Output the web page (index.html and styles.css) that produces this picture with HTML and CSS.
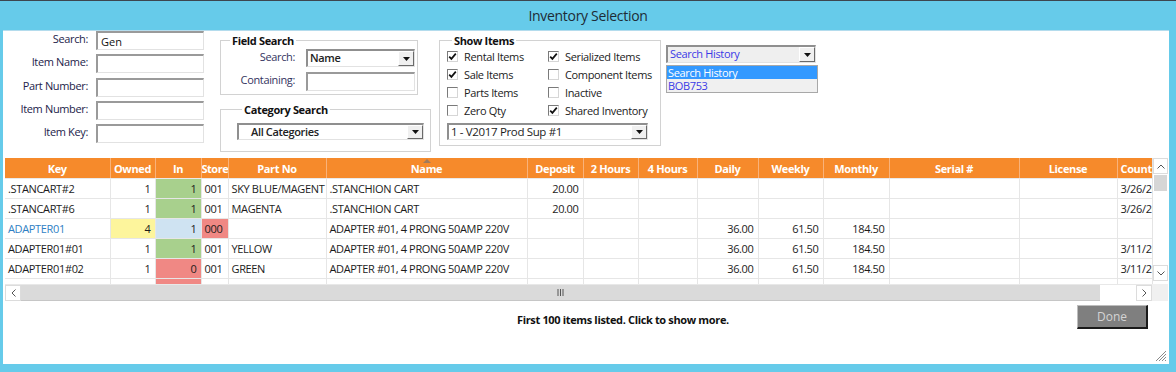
FILE: index.html
```html
<!DOCTYPE html>
<html lang="en">
<head>
    <meta charset="UTF-8">
    <title>Inventory Selection</title>
    <link rel="stylesheet" href="styles.css">
</head>
<body>
    <div class="window">
        <div class="titlebar">Inventory Selection</div>

        <div class="client">
            <!-- Search filters -->
            <div class="filters">
                <div class="keyfields">
                    <label>Search:</label><input class="txt" value="Gen">
                    <label>Item Name:</label><input class="txt">
                    <label>Part Number:</label><input class="txt">
                    <label>Item Number:</label><input class="txt">
                    <label>Item Key:</label><input class="txt">
                </div>

                <div class="group-col">
                    <fieldset class="group field-search">
                        <legend>Field Search</legend>
                        <div class="field-grid">
                            <label>Search:</label>
                            <div class="combo"><span class="combo-text strong">Name</span><span class="combo-btn"><svg width="7" height="4" viewBox="0 0 7 4"><path d="M0 0H7L3.5 4Z" fill="#111"/></svg></span></div>
                            <label>Containing:</label>
                            <input class="txt">
                        </div>
                    </fieldset>

                    <fieldset class="group category-search">
                        <legend>Category Search</legend>
                        <div class="combo cat-combo"><span class="combo-text strong">All Categories</span><span class="combo-btn"><svg width="7" height="4" viewBox="0 0 7 4"><path d="M0 0H7L3.5 4Z" fill="#111"/></svg></span></div>
                    </fieldset>
                </div>

                <fieldset class="group show-items">
                    <legend>Show Items</legend>
                    <div class="checks">
                        <div class="check"><span class="box on"><svg width="9" height="9" viewBox="0 0 9 9"><path d="M1.2 4.6L3.4 6.9L7.8 1.6" fill="none" stroke="#111" stroke-width="1.7"/></svg></span>Rental Items</div>
                        <div class="check"><span class="box on"><svg width="9" height="9" viewBox="0 0 9 9"><path d="M1.2 4.6L3.4 6.9L7.8 1.6" fill="none" stroke="#111" stroke-width="1.7"/></svg></span>Serialized Items</div>
                        <div class="check"><span class="box on"><svg width="9" height="9" viewBox="0 0 9 9"><path d="M1.2 4.6L3.4 6.9L7.8 1.6" fill="none" stroke="#111" stroke-width="1.7"/></svg></span>Sale Items</div>
                        <div class="check"><span class="box"></span>Component Items</div>
                        <div class="check"><span class="box"></span>Parts Items</div>
                        <div class="check"><span class="box"></span>Inactive</div>
                        <div class="check"><span class="box"></span>Zero Qty</div>
                        <div class="check"><span class="box on"><svg width="9" height="9" viewBox="0 0 9 9"><path d="M1.2 4.6L3.4 6.9L7.8 1.6" fill="none" stroke="#111" stroke-width="1.7"/></svg></span>Shared Inventory</div>
                        <div class="combo store-combo"><span class="combo-text">1 - V2017 Prod Sup #1</span><span class="combo-btn"><svg width="7" height="4" viewBox="0 0 7 4"><path d="M0 0H7L3.5 4Z" fill="#111"/></svg></span></div>
                    </div>
                </fieldset>

                <div class="history">
                    <div class="combo history-combo"><span class="combo-text">Search History</span><span class="combo-btn"><svg width="7" height="4" viewBox="0 0 7 4"><path d="M0 0H7L3.5 4Z" fill="#111"/></svg></span></div>
                    <ul class="history-list">
                        <li class="selected">Search History</li>
                        <li>BOB753</li>
                    </ul>
                </div>
            </div>

            <!-- Item grid -->
            <div class="grid">
                <div class="grid-main">
                    <div class="grid-view">
                        <table>
                            <colgroup>
                                <col style="width:105px"><col style="width:45px"><col style="width:46px"><col style="width:27px">
                                <col style="width:98px"><col style="width:201px"><col style="width:56px"><col style="width:55px">
                                <col style="width:59px"><col style="width:61px"><col style="width:65px"><col style="width:66px">
                                <col style="width:130px"><col style="width:98px"><col style="width:70px">
                            </colgroup>
                            <thead>
                                <tr>
                                    <th>Key</th><th>Owned</th><th>In</th><th class="tight">Store</th><th>Part No</th>
                                    <th class="sorted">Name</th><th>Deposit</th><th>2 Hours</th><th>4 Hours</th><th>Daily</th>
                                    <th>Weekly</th><th>Monthly</th><th>Serial #</th><th>License</th><th class="left">Count</th>
                                </tr>
                            </thead>
                            <tbody>
                                <tr>
                                    <td>.STANCART#2</td><td class="num">1</td><td class="num in-ok">1</td><td>001</td><td>SKY BLUE/MAGENT</td>
                                    <td>.STANCHION CART</td><td class="num">20.00</td><td></td><td></td><td></td>
                                    <td></td><td></td><td></td><td></td><td>3/26/2017</td>
                                </tr>
                                <tr>
                                    <td>.STANCART#6</td><td class="num">1</td><td class="num in-ok">1</td><td>001</td><td>MAGENTA</td>
                                    <td>.STANCHION CART</td><td class="num">20.00</td><td></td><td></td><td></td>
                                    <td></td><td></td><td></td><td></td><td>3/26/2017</td>
                                </tr>
                                <tr>
                                    <td class="link">ADAPTER01</td><td class="num owned-multi">4</td><td class="num in-part">1</td><td class="store-none">000</td><td></td>
                                    <td>ADAPTER #01, 4 PRONG 50AMP 220V</td><td></td><td></td><td></td><td class="num">36.00</td>
                                    <td class="num">61.50</td><td class="num">184.50</td><td></td><td></td><td></td>
                                </tr>
                                <tr>
                                    <td>ADAPTER01#01</td><td class="num">1</td><td class="num in-ok">1</td><td>001</td><td>YELLOW</td>
                                    <td>ADAPTER #01, 4 PRONG 50AMP 220V</td><td></td><td></td><td></td><td class="num">36.00</td>
                                    <td class="num">61.50</td><td class="num">184.50</td><td></td><td></td><td>3/11/2017</td>
                                </tr>
                                <tr>
                                    <td>ADAPTER01#02</td><td class="num">1</td><td class="num in-out">0</td><td>001</td><td>GREEN</td>
                                    <td>ADAPTER #01, 4 PRONG 50AMP 220V</td><td></td><td></td><td></td><td class="num">36.00</td>
                                    <td class="num">61.50</td><td class="num">184.50</td><td></td><td></td><td>3/11/2017</td>
                                </tr>
                                <tr>
                                    <td>ADAPTER01#03</td><td class="num">1</td><td class="num in-out">0</td><td>001</td><td>RED</td>
                                    <td>ADAPTER #01, 4 PRONG 50AMP 220V</td><td></td><td></td><td></td><td class="num">36.00</td>
                                    <td class="num">61.50</td><td class="num">184.50</td><td></td><td></td><td>3/11/2017</td>
                                </tr>
                            </tbody>
                        </table>
                    </div>
                    <div class="vscroll">
                        <span class="sb-btn"><svg width="8" height="5" viewBox="0 0 8 5"><path d="M0.5 4.5L4 1L7.5 4.5" fill="none" stroke="#555" stroke-width="1"/></svg></span>
                        <span class="vthumb"></span>
                        <span class="sb-track"></span>
                        <span class="sb-btn"><svg width="8" height="5" viewBox="0 0 8 5"><path d="M0.5 0.5L4 4L7.5 0.5" fill="none" stroke="#555" stroke-width="1"/></svg></span>
                    </div>
                </div>
                <div class="hscroll-row">
                    <div class="hscroll">
                        <span class="sb-btn"><svg width="5" height="8" viewBox="0 0 5 8"><path d="M4.5 0.5L1 4L4.5 7.5" fill="none" stroke="#555" stroke-width="1"/></svg></span>
                        <span class="hthumb"><svg width="7" height="7" viewBox="0 0 7 7"><path d="M1 0V7M3.5 0V7M6 0V7" stroke="#555" stroke-width="1"/></svg></span>
                        <span class="sb-track"></span>
                        <span class="sb-btn"><svg width="5" height="8" viewBox="0 0 5 8"><path d="M0.5 0.5L4 4L0.5 7.5" fill="none" stroke="#555" stroke-width="1"/></svg></span>
                    </div>
                    <span class="corner"></span>
                </div>
            </div>

            <!-- Footer -->
            <div class="footer">
                <span class="more">First 100 items listed. Click to show more.</span>
                <button class="done">Done</button>
            </div>

            <svg class="grip" width="12" height="12" viewBox="0 0 12 12">
                <path d="M11 1L1 11M11 4L4 11M11 7L7 11M11 10L10 11" stroke="#8a8a8a" stroke-width="1"/>
            </svg>
        </div>
    </div>
</body>
</html>
```

FILE: styles.css
```css
body {
    margin: 0;
    background-color: #66cbea;
    font-family: "Open Sans", "Noto Sans", sans-serif;
    font-size: 11px;
    letter-spacing: -0.35px;
    color: #1c1c1c;
}
.window {
    border-top: 1px solid #3d4650;
    height: 371px;
}
.titlebar {
    height: 29px;
    line-height: 29px;
    text-align: center;
    font-size: 14px;
    letter-spacing: -0.3px;
    color: #1e2b36;
}
.client {
    position: relative;
    margin: 0 7px 0 3px;
    height: 334px;
    background: #fff;
    box-sizing: border-box;
    border-top: 1px solid #b4dced;
}

/* ---------- filters ---------- */
.filters {
    display: flex;
    align-items: flex-start;
    height: 127px;
}
.keyfields {
    display: grid;
    grid-template-columns: 85px 108px;
    grid-auto-rows: 19px;
    column-gap: 8px;
    row-gap: 4.25px;
}
label {
    text-align: right;
    line-height: 16px;
    color: #23234a;
    white-space: nowrap;
}
.txt {
    box-sizing: border-box;
    width: 100%;
    height: 19px;
    margin: 0;
    padding: 0 3px;
    font: inherit;
    color: #111;
    background: #fff;
    border-style: solid;
    border-width: 2px 1px 1px 2px;
    border-color: #9a9a9a #e2e2e2 #e2e2e2 #9a9a9a;
    outline: none;
}
.group-col {
    margin-left: 16px;
}
.group {
    box-sizing: border-box;
    margin: 0;
    border: 1px solid #d2d2d2;
}
.group legend {
    padding: 0 2px;
    margin-left: 5px;
    font-weight: 700;
    line-height: 13px;
    color: #111;
}
.field-search {
    width: 198px;
    height: 61px;
    margin-top: 3px;
    padding: 2px 1px 0 4px;
}
.field-grid {
    display: grid;
    grid-template-columns: 70px 109px;
    grid-template-rows: 18px 19px;
    column-gap: 11px;
    row-gap: 5px;
}
.field-grid label {
    color: #33335e;
}
.category-search {
    width: 211px;
    height: 49px;
    margin-top: 8px;
    padding: 7px 6px 0 16px;
}

/* combo boxes */
.combo {
    box-sizing: border-box;
    display: flex;
    align-items: stretch;
    height: 18px;
    background: #fff;
    border-style: solid;
    border-width: 2px 1px 1px 2px;
    border-color: #8f8f8f #e2e2e2 #e2e2e2 #8f8f8f;
}
.combo-text {
    flex: 1;
    padding-left: 2px;
    line-height: 14px;
    white-space: nowrap;
    overflow: hidden;
}
.strong {
    font-weight: 600;
    color: #222;
}
.combo-btn {
    width: 14px;
    display: flex;
    align-items: center;
    justify-content: center;
    background: #f0f0f0;
    border-style: solid;
    border-width: 1px;
    border-color: #fff #6a6a6a #6a6a6a #fff;
}
.cat-combo {
    height: 17px;
}
.cat-combo .combo-text {
    padding-left: 12px;
}

.show-items {
    width: 222px;
    height: 112px;
    margin: 3px 0 0 8px;
    padding: 3px 6px 0 7px;
}
.checks {
    display: grid;
    grid-template-columns: 101px 1fr;
    grid-auto-rows: 18px;
}
.check {
    display: flex;
    align-items: center;
    height: 13px;
    white-space: nowrap;
    color: #222;
}
.box {
    box-sizing: border-box;
    width: 11px;
    height: 11px;
    margin-right: 6px;
    display: flex;
    align-items: center;
    justify-content: center;
    background: #fff;
    border-style: solid;
    border-width: 1px;
    border-color: #7a7a7a #d6d6d6 #d6d6d6 #7a7a7a;
}
.store-combo {
    grid-column: 1 / 3;
    margin-top: 1px;
    width: 201px;
    height: 17px;
    font-size: 11.5px;
}

.history {
    margin: 14px 0 0 5px;
    width: 152px;
}
.history-combo {
    width: 150px;
    background: #efefef;
}
.history-combo .combo-text,
.history-list li {
    color: #3a3ae6;
}
.history-list {
    list-style: none;
    margin: 2px 0 0;
    padding: 0;
    background: #f0f0f0;
    border: 1px solid #a8a8a8;
}
.history-list li {
    height: 13px;
    line-height: 13px;
    padding-left: 1px;
}
.history-list .selected {
    background: #3399ff;
    color: #fff;
}

/* ---------- grid ---------- */
.grid {
    margin-left: 2px;
    width: 1163px;
}
.grid-main {
    display: flex;
    height: 126px;
}
.grid-view {
    width: 1147px;
    overflow: hidden;
}
table {
    table-layout: fixed;
    width: 1182px;
    border-collapse: collapse;
}
th {
    position: relative;
    height: 20px;
    padding: 0;
    background: #f68a2b;
    color: #fff;
    font-weight: 700;
    text-align: center;
    white-space: nowrap;
    overflow: hidden;
    border-right: 1px solid #f9b27a;
    border-bottom: 1px solid #e9e9e9;
}
th.left {
    text-align: left;
    padding-left: 3px;
}
th.tight {
    letter-spacing: -0.5px;
}
th.sorted::before {
    content: "";
    position: absolute;
    left: 50%;
    top: 1px;
    margin-left: -4px;
    border-left: 4px solid transparent;
    border-right: 4px solid transparent;
    border-bottom: 4px solid #a07a5c;
}
td {
    height: 19px;
    padding: 0 3px;
    border-right: 1px solid #e6e6e6;
    border-bottom: 1px solid #e6e6e6;
    white-space: nowrap;
    overflow: hidden;
    color: #1c1c1c;
}
td.num {
    text-align: right;
    padding-right: 4px;
}
td.link {
    color: #2f7fc4;
}
.in-ok {
    background: #a8d08d;
}
.in-part {
    background: #cfe3f2;
}
.in-out {
    background: #f08884;
}
.owned-multi {
    background: #fdf59c;
}
.store-none {
    background: #f08884;
}

.vscroll {
    width: 16px;
    display: flex;
    flex-direction: column;
    background: #fff;
    border-left: 1px solid #e4e4e4;
    box-sizing: border-box;
}
.sb-btn {
    display: flex;
    align-items: center;
    justify-content: center;
    width: 16px;
    height: 16px;
    background: #fff;
    box-sizing: border-box;
    border: 1px solid #dcdcdc;
}
.vscroll .sb-btn {
    width: 15px;
}
.vthumb {
    height: 16px;
    margin: 1px 1px 0;
    background: #d6d6d6;
}
.sb-track {
    flex: 1;
}
.vscroll .sb-btn:last-child {
    margin-bottom: 3px;
}
.hscroll-row {
    display: flex;
    height: 17px;
}
.hscroll {
    width: 1147px;
    display: flex;
    box-sizing: border-box;
    border-top: 1px solid #e8e8e8;
}
.hthumb {
    width: 1079px;
    display: flex;
    align-items: center;
    justify-content: center;
    background: #dadada;
    border-bottom: 1px solid #c6c6c6;
}
.corner {
    flex: 1;
    background: #f0f0f0;
}

/* ---------- footer ---------- */
.footer {
    display: flex;
    align-items: flex-start;
}
.more {
    margin: 11px 0 0 514px;
    font-weight: 700;
    color: #111;
    white-space: nowrap;
}
.done {
    margin: 4px 21px 0 auto;
    width: 71px;
    height: 24px;
    padding: 0;
    font: inherit;
    font-size: 12px;
    color: #d4d4d4;
    background: #7f7f7f;
    border-style: solid;
    border-width: 1px 2px 2px 1px;
    border-color: #bdbdbd #1a1a1a #1a1a1a #bdbdbd;
}
.grip {
    position: absolute;
    right: 2px;
    bottom: 2px;
}
```
